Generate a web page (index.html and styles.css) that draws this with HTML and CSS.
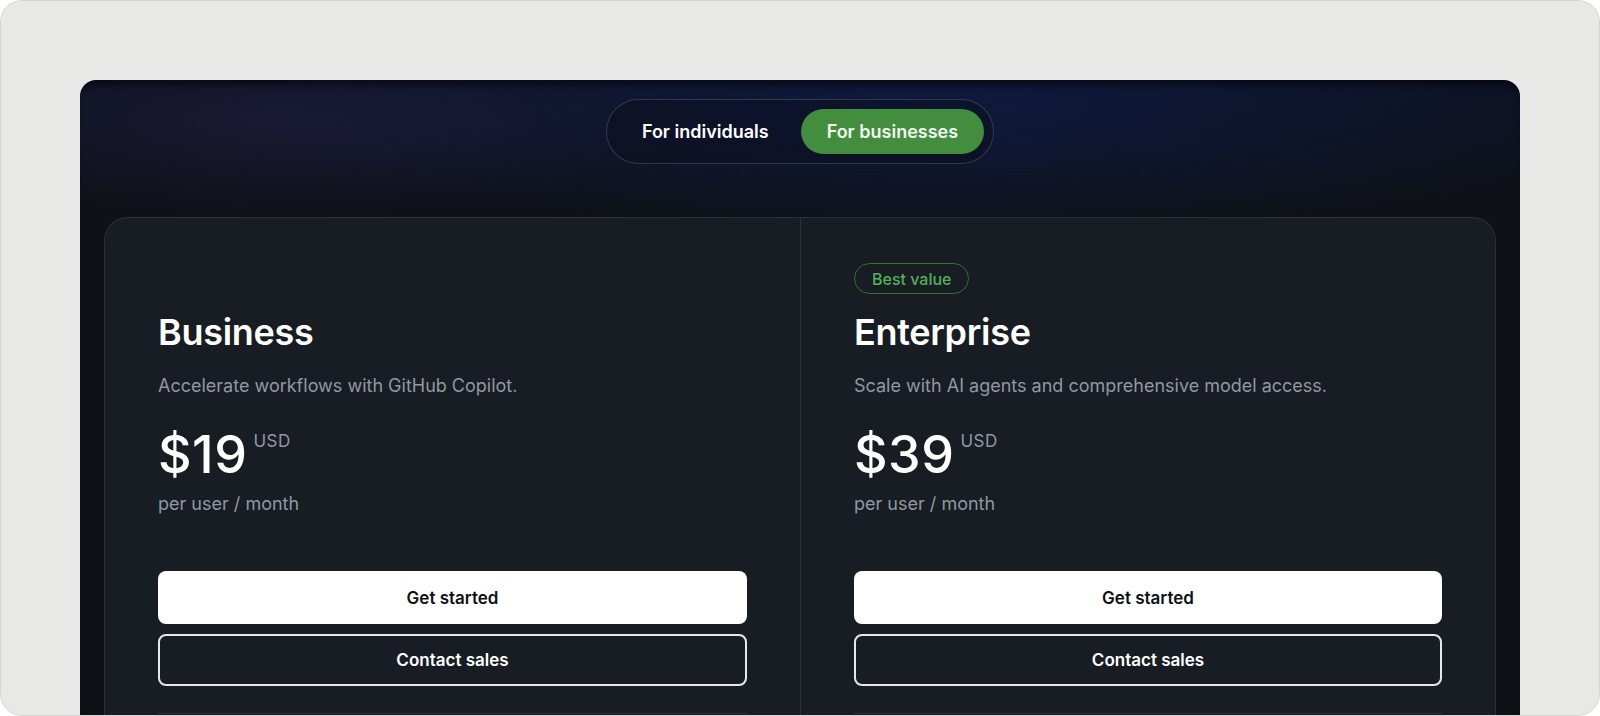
FILE: index.html
```html
<!DOCTYPE html>
<html lang="en">
<head>
    <meta charset="UTF-8">
    <meta name="viewport" content="width=device-width, initial-scale=1.0">
    <title>Copilot plans</title>
    <link rel="stylesheet" href="styles.css">
</head>
<body>
    <div class="frame">
        <div class="panel">
            <div class="toggle">
                <button class="toggle-btn">For individuals</button>
                <button class="toggle-btn active">For businesses</button>
            </div>

            <div class="plans">
                <div class="plan">
                    <div class="badge-row"></div>
                    <h2 class="plan-name">Business</h2>
                    <p class="plan-desc">Accelerate workflows with GitHub Copilot.</p>
                    <div class="price">
                        <span class="amount">$19</span>
                        <span class="currency">USD</span>
                    </div>
                    <p class="per">per user / month</p>
                    <div class="actions">
                        <button class="btn btn-primary">Get started</button>
                        <button class="btn btn-outline">Contact sales</button>
                    </div>
                    <div class="features"></div>
                </div>

                <div class="plan">
                    <div class="badge-row"><span class="badge">Best value</span></div>
                    <h2 class="plan-name">Enterprise</h2>
                    <p class="plan-desc">Scale with AI agents and comprehensive model access.</p>
                    <div class="price">
                        <span class="amount">$39</span>
                        <span class="currency">USD</span>
                    </div>
                    <p class="per">per user / month</p>
                    <div class="actions">
                        <button class="btn btn-primary">Get started</button>
                        <button class="btn btn-outline">Contact sales</button>
                    </div>
                    <div class="features"></div>
                </div>
            </div>
        </div>
    </div>
</body>
</html>
```

FILE: styles.css
```css
:root {
    --frame-bg: #e8e8e6;
    --panel-bg: #0e1116;
    --card-bg: #181c23;
    --card-border: rgba(255, 255, 255, 0.09);
    --muted: #9198a1;
    --green: #438d3f;
}

* {
    box-sizing: border-box;
}

body {
    margin: 0;
    background: #ffffff;
    font-family: 'Inter', 'Liberation Sans', sans-serif;
    overflow: hidden;
}

.frame {
    height: 716px;
    padding: 79px 79px 0;
    background: var(--frame-bg);
    border: 1px solid #d5d5d3;
    border-radius: 22px;
    overflow: hidden;
}

.panel {
    height: 100%;
    padding-top: 19px;
    border-radius: 16px 16px 0 0;
    background:
        radial-gradient(ellipse 420px 100px at 14% 40px, rgba(40, 36, 80, 0.45), transparent),
        radial-gradient(ellipse 700px 130px at 60% 30px, rgba(16, 32, 86, 0.55), transparent),
        linear-gradient(#0d1120, var(--panel-bg) 135px);
    box-shadow: inset 0 10px 6px -5px rgba(0, 0, 0, 0.5);
    overflow: hidden;
}

.toggle {
    display: flex;
    width: max-content;
    margin: 0 auto;
    padding: 9px;
    gap: 6px;
    border: 1px solid rgba(255, 255, 255, 0.16);
    border-radius: 999px;
    background: rgba(10, 14, 28, 0.45);
}

.toggle-btn {
    height: 45px;
    padding: 0 26px;
    border: none;
    border-radius: 999px;
    background: transparent;
    color: #ffffff;
    font-family: inherit;
    font-size: 18px;
    font-weight: 600;
    cursor: pointer;
}

.toggle-btn.active {
    background: var(--green);
    color: #f1fbef;
}

.plans {
    display: grid;
    grid-template-columns: 1fr 1fr;
    margin: 53px 24px 0;
    background: var(--card-bg);
    border: 1px solid var(--card-border);
    border-radius: 24px;
}

.plan {
    padding: 45px 53px 0;
}

.plan + .plan {
    border-left: 1px solid var(--card-border);
}

.badge-row {
    height: 31px;
}

.badge {
    display: inline-flex;
    align-items: center;
    height: 31px;
    padding: 0 17px;
    border: 1px solid #2f7336;
    border-radius: 999px;
    color: #4fb357;
    font-size: 16px;
    font-weight: 500;
}

.plan-name {
    margin: 17px 0 0;
    color: #ffffff;
    font-size: 36px;
    font-weight: 600;
    line-height: 1.2;
    letter-spacing: -0.3px;
}

.plan-desc {
    margin: 18px 0 0;
    color: var(--muted);
    font-size: 18px;
    line-height: 27px;
}

.price {
    display: flex;
    align-items: flex-start;
    gap: 6px;
    margin-top: 32px;
}

.amount {
    color: #ffffff;
    font-size: 52px;
    font-weight: 500;
    line-height: 48px;
    letter-spacing: 0.5px;
}

.currency {
    margin-top: 2px;
    color: var(--muted);
    font-size: 17px;
    line-height: 16px;
    letter-spacing: 0.5px;
}

.per {
    margin: 11px 0 0;
    color: var(--muted);
    font-size: 18px;
    line-height: 27px;
}

.actions {
    display: flex;
    flex-direction: column;
    gap: 10px;
    margin-top: 54px;
}

.btn {
    height: 53px;
    border-radius: 8px;
    font-family: inherit;
    font-size: 17px;
    font-weight: 600;
    cursor: pointer;
}

.btn-primary {
    border: none;
    background: #ffffff;
    color: #0d1117;
}

.btn-outline {
    height: 52px;
    border: 2px solid #e6e8eb;
    background: transparent;
    color: #ffffff;
}

.features {
    height: 40px;
    margin-top: 27px;
    border-top: 1px solid var(--card-border);
}
```
